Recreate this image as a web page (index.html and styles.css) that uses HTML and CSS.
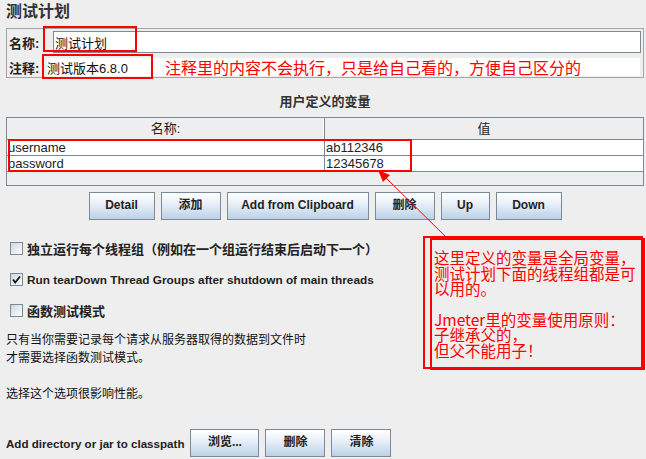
FILE: index.html
```html
<!DOCTYPE html>
<html lang="zh-CN">
<head>
    <meta charset="UTF-8">
    <title>测试计划</title>
    <link rel="stylesheet" href="styles.css">
</head>
<body>
    <div class="page">
        <h1 class="title">测试计划</h1>

        <div class="info">
            <div class="field-row">
                <label class="field-label">名称:</label>
                <div class="input input-name">测试计划</div>
            </div>
            <div class="field-row row-comment">
                <label class="field-label">注释:</label>
                <div class="input input-comment">测试版本6.8.0</div>
            </div>
        </div>

        <div class="vars-title">用户定义的变量</div>
        <div class="vars">
            <div class="vars-head">
                <div class="cell">名称:</div>
                <div class="cell">值</div>
            </div>
            <div class="vars-row">
                <div class="cell">username</div>
                <div class="cell">ab112346</div>
            </div>
            <div class="vars-row">
                <div class="cell">password</div>
                <div class="cell">12345678</div>
            </div>
        </div>

        <div class="btn-row">
            <button class="btn btn-detail">Detail</button>
            <button class="btn btn-60 btn-cjk">添加</button>
            <button class="btn btn-clip">Add from Clipboard</button>
            <button class="btn btn-60 btn-cjk">删除</button>
            <button class="btn btn-up">Up</button>
            <button class="btn btn-detail">Down</button>
        </div>

        <div class="options">
            <div class="check-row"><span class="check"></span>独立运行每个线程组（例如在一个组运行结束后启动下一个）</div>
            <div class="check-row check-latin">
                <span class="check">
                    <svg width="11" height="11" viewBox="0 0 11 11"><path d="M2 5.5 L4.2 8.5 L9 2.5" fill="none" stroke="#111" stroke-width="1.8"/></svg>
                </span>Run tearDown Thread Groups after shutdown of main threads
            </div>
            <div class="check-row"><span class="check"></span>函数测试模式</div>
        </div>

        <p class="hint">只有当你需要记录每个请求从服务器取得的数据到文件时<br>才需要选择函数测试模式。<br><br>选择这个选项很影响性能。</p>

        <div class="classpath">
            <span class="classpath-label">Add directory or jar to classpath</span>
            <button class="btn btn-browse btn-cjk">浏览...</button>
            <button class="btn btn-60 btn-cjk">删除</button>
            <button class="btn btn-60 btn-cjk">清除</button>
        </div>

        <!-- annotations drawn on top of the screenshot -->
        <div class="mark mark-name"></div>
        <div class="mark mark-comment"></div>
        <div class="mark mark-rows"></div>
        <div class="mark mark-note-a"></div>
        <div class="mark mark-note-b"></div>
        <div class="note-inline">注释里的内容不会执行，只是给自己看的，方便自己区分的</div>
        <div class="note-text">
            <div>这里定义的变量是全局变量，</div>
            <div>测试计划下面的线程组都是可</div>
            <div>以用的。</div>
            <div class="note-gap">Jmeter里的变量使用原则：</div>
            <div>子继承父的，</div>
            <div>但父不能用子！</div>
        </div>
        <svg class="arrow" width="646" height="459" viewBox="0 0 646 459">
            <line x1="446" y1="237" x2="382" y2="174" stroke="#ff0000" stroke-width="1"/>
            <polygon points="378,170 390,175 383,182" fill="#ff0000"/>
        </svg>
    </div>
</body>
</html>
```

FILE: styles.css
```css
body {
    margin: 0;
    background: #eeeeee;
    font-family: "Liberation Sans", Arial, "Noto Sans CJK SC", sans-serif;
    font-size: 13px;
    color: #222;
}
.page {
    position: relative;
    width: 646px;
    height: 459px;
    padding: 0 2px 0 6px;
    box-sizing: border-box;
    overflow: hidden;
}
.title {
    margin: 0;
    padding-top: 4px;
    font-size: 16px;
    line-height: 16px;
    font-weight: bold;
    color: #333;
}
.info {
    margin-top: 8px;
    border: 1px solid #a5a5a5;
    padding: 2px 1px 0 1px;
}
.field-row {
    display: flex;
    align-items: center;
    height: 22px;
}
.row-comment {
    margin-top: 4px;
    height: 20px;
}
.field-label {
    width: 38px;
    padding-left: 1px;
    font-weight: bold;
    font-size: 13px;
}
.input {
    flex: 1;
    height: 100%;
    box-sizing: border-box;
    background: #fff;
    display: flex;
    align-items: center;
    font-size: 13px;
    color: #111;
}
.input-name {
    margin-left: 6px;
    margin-right: 1px;
    border: 1px solid #7a8a99;
    padding-left: 1px;
}
.input-comment {
    margin-right: 2px;
    height: 18px;
}
.vars-title {
    margin-top: 17px;
    text-align: center;
    font-weight: bold;
    line-height: 14px;
    color: #333;
}
.vars {
    margin-top: 8px;
    height: 69px;
    box-sizing: border-box;
    border: 1px solid #7a8a99;
}
.vars-head, .vars-row {
    display: grid;
    grid-template-columns: 318px 1fr;
    border-bottom: 1px solid #7a8a99;
}
.vars-head {
    height: 21px;
}
.vars-head .cell {
    text-align: center;
    line-height: 21px;
    color: #222;
}
.vars-head .cell:first-child {
    border-right: 1px solid #7a8a99;
    box-shadow: inset -1px 0 0 #ffffff;
}
.vars-row {
    height: 15px;
    background: #fff;
}
.vars-row .cell {
    line-height: 15px;
    padding-left: 1px;
    color: #222;
}
.vars-row .cell:first-child {
    border-right: 1px solid #7a8a99;
}
.btn-row {
    margin-top: 6px;
    display: flex;
    justify-content: center;
    gap: 6px;
}
.btn {
    height: 28px;
    padding: 0 0 2px 0;
    border: 1px solid #7a8a99;
    background: linear-gradient(to bottom, #ffffff 0%, #e9f0f8 40%, #bcd1e7 100%);
    font-family: "Liberation Sans", Arial, "Noto Sans CJK SC", sans-serif;
    font-size: 12px;
    font-weight: bold;
    color: #222;
}
.btn-cjk {
    padding-bottom: 5px;
}
.btn-detail { width: 66px; }
.btn-60 { width: 60px; }
.btn-clip { width: 142px; }
.btn-up { width: 49px; }
.btn-browse { width: 69px; }
.options {
    margin-top: 13px;
}
.check-row {
    display: flex;
    align-items: center;
    height: 31px;
    padding-left: 4px;
    font-weight: bold;
    font-size: 13px;
    color: #222;
}
.check-latin {
    font-size: 11.8px;
}
.check {
    width: 13px;
    height: 13px;
    box-sizing: border-box;
    border: 1px solid #7a8a99;
    background: linear-gradient(135deg, #cbd6e2, #ffffff);
    margin-right: 4px;
    display: flex;
    align-items: center;
    justify-content: center;
}
.hint {
    margin: 5px 0 0 0;
    font-size: 12px;
    line-height: 18px;
    color: #111;
}
.classpath {
    margin-top: 26px;
    display: flex;
    align-items: center;
    gap: 6px;
}
.classpath-label {
    font-weight: bold;
    font-size: 11.6px;
    color: #222;
}
.mark {
    position: absolute;
    border: 2px solid #ff0000;
    box-sizing: border-box;
}
.mark-name { left: 43px; top: 26px; width: 94px; height: 26px; }
.mark-comment { left: 42px; top: 54px; width: 111px; height: 25px; }
.mark-rows { left: 8px; top: 139px; width: 404px; height: 33px; }
.mark-note-a { left: 423px; top: 236px; width: 220px; height: 133px; }
.mark-note-b { left: 430px; top: 238px; width: 215px; height: 132px; }
.note-inline, .note-text {
    position: absolute;
    font-family: "Noto Sans CJK SC", sans-serif;
    font-size: 16px;
    color: #ff0000;
    white-space: nowrap;
}
.note-inline {
    left: 165px;
    top: 57px;
    line-height: 20px;
}
.note-text {
    left: 434px;
    top: 250px;
    font-size: 15.5px;
}
.note-text div {
    height: 15.5px;
    line-height: 15.5px;
    overflow: visible;
}
.note-text .note-gap {
    margin-top: 15px;
}
.arrow {
    position: absolute;
    left: 0;
    top: 0;
    pointer-events: none;
}
```
